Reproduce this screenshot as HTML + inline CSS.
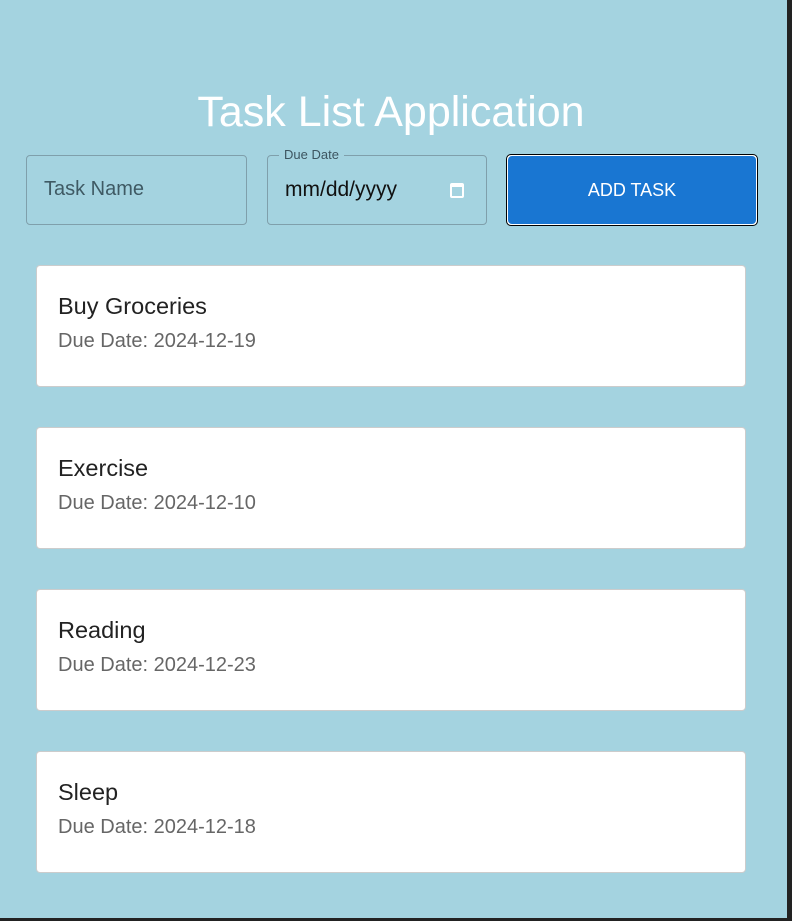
<!DOCTYPE html>
<html><head><style>
body{margin:0;width:792px;height:921px;background:#222;overflow:hidden;font-family:"Liberation Sans",sans-serif;position:relative}
#bg{position:absolute;left:0;top:0;width:787px;height:918px;background:#a4d3e0}
h1{position:absolute;left:0;width:782px;top:88px;margin:0;text-align:center;font-weight:400;font-size:43px;color:#fff;line-height:48px}
.in{position:absolute;top:155px;height:70px;border:1px solid #7f9fab;border-radius:4px;box-sizing:border-box}
.lbl{position:absolute;left:11px;top:-9px;background:#a4d3e0;padding:0 5px;font-size:13px;color:#3d5560}
.btn{position:absolute;left:506px;top:154px;width:252px;height:72px;box-sizing:border-box;border:1px solid #000;border-radius:5px;background:#fff;padding:1px}
.btn div{width:100%;height:100%;background:#1976d2;border-radius:4px;color:#fff;font-size:18px;display:flex;align-items:center;justify-content:center}
.card{position:absolute;left:36px;width:710px;height:122px;background:#fff;border:1px solid #ccc;border-radius:4px;box-sizing:border-box}
.card .t{position:absolute;left:21px;top:27px;font-size:23.5px;color:#222}
.card .d{position:absolute;left:21px;top:64px;font-size:20px;color:#666}
</style></head><body>
<div id="bg"></div>
<h1>Task List Application</h1>
<div class="in" style="left:26px;width:221px"><span style="position:absolute;left:17px;top:22px;font-size:20px;color:#3f5a64">Task Name</span></div>
<div class="in" style="left:267px;width:220px"><span class="lbl">Due Date</span><span style="position:absolute;left:17px;top:22px;font-size:21px;color:#111">mm/dd/yyyy</span>
<svg style="position:absolute;left:181px;top:25px" width="16" height="18" viewBox="0 0 16 18"><rect x="2" y="3" width="12" height="13" rx="1" fill="none" stroke="#fff" stroke-width="2"/><rect x="2" y="3" width="12" height="3" fill="#fff"/></svg></div>
<div class="btn"><div>ADD TASK</div></div>
<div class="card" style="top:265px"><div class="t">Buy Groceries</div><div class="d">Due Date: 2024-12-19</div></div>
<div class="card" style="top:427px"><div class="t">Exercise</div><div class="d">Due Date: 2024-12-10</div></div>
<div class="card" style="top:589px"><div class="t">Reading</div><div class="d">Due Date: 2024-12-23</div></div>
<div class="card" style="top:751px"><div class="t">Sleep</div><div class="d">Due Date: 2024-12-18</div></div>
</body></html>
